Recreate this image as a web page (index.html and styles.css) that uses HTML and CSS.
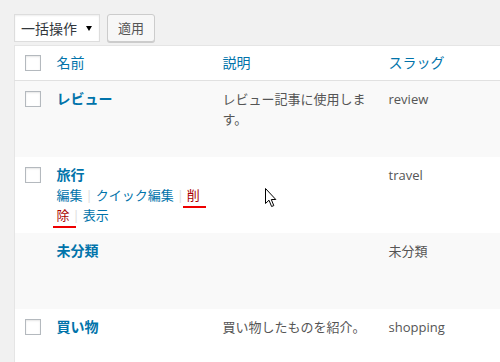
FILE: index.html
```html
<!DOCTYPE html>
<html lang="ja">
<head>
  <meta charset="UTF-8">
  <meta name="viewport" content="width=device-width, initial-scale=1.0">
  <title>カテゴリー</title>
  <link rel="stylesheet" href="styles.css">
</head>
<body>
  <div class="tablenav">
    <div class="select">
      <span>一括操作</span>
      <span class="arrow"></span>
    </div>
    <button class="button">適用</button>
  </div>

  <table class="list-table">
    <colgroup>
      <col class="col-check">
      <col class="col-name">
      <col class="col-desc">
      <col>
    </colgroup>
    <thead>
      <tr>
        <th class="check-column"><span class="checkbox"></span></th>
        <th><a href="#">名前</a></th>
        <th><a href="#">説明</a></th>
        <th><a href="#">スラッグ</a></th>
      </tr>
    </thead>
    <tbody>
      <tr class="alternate">
        <td class="check-column"><span class="checkbox"></span></td>
        <td>
          <a class="row-title" href="#">レビュー</a>
          <div class="row-actions">
            <a href="#">編集</a><span class="sep">|</span><a href="#">クイック編集</a><span class="sep">|</span><a class="delete" href="#">削除</a><span class="sep">|</span><a href="#">表示</a>
          </div>
        </td>
        <td class="desc">レビュー記事に使用します。</td>
        <td class="desc">review</td>
      </tr>
      <tr>
        <td class="check-column"><span class="checkbox"></span></td>
        <td>
          <a class="row-title" href="#">旅行</a>
          <div class="row-actions visible">
            <a href="#">編集</a><span class="sep">|</span><a href="#">クイック編集</a><span class="sep">|</span><a class="delete" href="#"><span class="mark">削</span><span class="mark">除</span></a><span class="sep">|</span><a href="#">表示</a>
          </div>
        </td>
        <td class="desc"></td>
        <td class="desc">travel</td>
      </tr>
      <tr class="alternate">
        <td class="check-column"></td>
        <td>
          <a class="row-title" href="#">未分類</a>
          <div class="row-actions">
            <a href="#">編集</a><span class="sep">|</span><a href="#">クイック編集</a><span class="sep">|</span><a href="#">表示</a>
          </div>
        </td>
        <td class="desc"></td>
        <td class="desc">未分類</td>
      </tr>
      <tr>
        <td class="check-column"><span class="checkbox"></span></td>
        <td>
          <a class="row-title" href="#">買い物</a>
          <div class="row-actions">
            <a href="#">編集</a><span class="sep">|</span><a href="#">クイック編集</a><span class="sep">|</span><a class="delete" href="#">削除</a><span class="sep">|</span><a href="#">表示</a>
          </div>
        </td>
        <td class="desc">買い物したものを紹介。</td>
        <td class="desc">shopping</td>
      </tr>
    </tbody>
  </table>

  <!-- mouse pointer in the shot -->
  <svg class="cursor" width="12" height="20" viewBox="0 0 12 20">
    <polygon points="0.5,0.5 0.5,15.5 4,12.2 6.6,18.5 8.8,17.6 6.3,11.5 10.8,11.5" fill="#fff" stroke="#000" stroke-width="1"/>
  </svg>
</body>
</html>
```

FILE: styles.css
```css
body {
  margin: 0;
  padding: 14px 0 0 14px;
  background: #f1f1f1;
  font-family: "Open Sans", "Noto Sans CJK JP", sans-serif;
  font-size: 13px;
  color: #444;
  overflow: hidden;
  position: relative;
  height: 348px;
}

a {
  color: #0073aa;
  text-decoration: none;
}

.tablenav {
  display: flex;
  align-items: center;
  gap: 7px;
  height: 28px;
  margin-bottom: 3px;
}

.select {
  box-sizing: border-box;
  width: 86px;
  height: 28px;
  display: flex;
  align-items: center;
  justify-content: space-between;
  padding: 0 7px 0 6px;
  background: #fff;
  border: 1px solid #ddd;
  box-shadow: inset 0 1px 2px rgba(0, 0, 0, 0.07);
  font-size: 14px;
  color: #32373c;
}

.arrow {
  width: 0;
  height: 0;
  border-left: 3px solid transparent;
  border-right: 3px solid transparent;
  border-top: 5px solid #000;
}

.button {
  box-sizing: border-box;
  height: 28px;
  padding: 0 10px 1px;
  font-family: inherit;
  font-size: 13px;
  line-height: 26px;
  color: #555;
  background: #f7f7f7;
  border: 1px solid #ccc;
  border-radius: 3px;
  box-shadow: 0 1px 0 #ccc;
}

.list-table {
  width: 560px;
  table-layout: fixed;
  border-collapse: collapse;
  border: 1px solid #e5e5e5;
  background: #fff;
}

.col-check {
  width: 32px;
}

.col-name,
.col-desc {
  width: 166px;
}

th,
td {
  padding: 8px 10px;
  text-align: left;
  vertical-align: top;
  line-height: 20px;
}

thead th {
  padding-top: 7px;
  padding-bottom: 7px;
  font-weight: normal;
  font-size: 14px;
  border-bottom: 1px solid #e1e1e1;
}

.check-column {
  padding: 9px 0 0 10px;
}

tbody .check-column {
  padding-top: 10px;
}

.checkbox {
  display: block;
  box-sizing: border-box;
  width: 16px;
  height: 16px;
  background: #fff;
  border: 1px solid #b4b9be;
  box-shadow: inset 0 1px 2px rgba(0, 0, 0, 0.1);
}

tr.alternate {
  background: #f9f9f9;
}

.row-title {
  font-size: 14px;
  font-weight: 600;
}

.row-actions {
  visibility: hidden;
  line-break: anywhere;
}

.row-actions.visible {
  visibility: visible;
}

.sep {
  color: #ddd;
  padding: 0 3px;
}

.delete {
  color: #a00;
}

.mark {
  position: relative;
}

.mark::after {
  content: "";
  position: absolute;
  left: -4px;
  right: -6px;
  top: 20px;
  height: 2px;
  background: #e00;
}

.desc {
  color: #555;
}

.cursor {
  position: absolute;
  left: 265px;
  top: 188px;
}
```
